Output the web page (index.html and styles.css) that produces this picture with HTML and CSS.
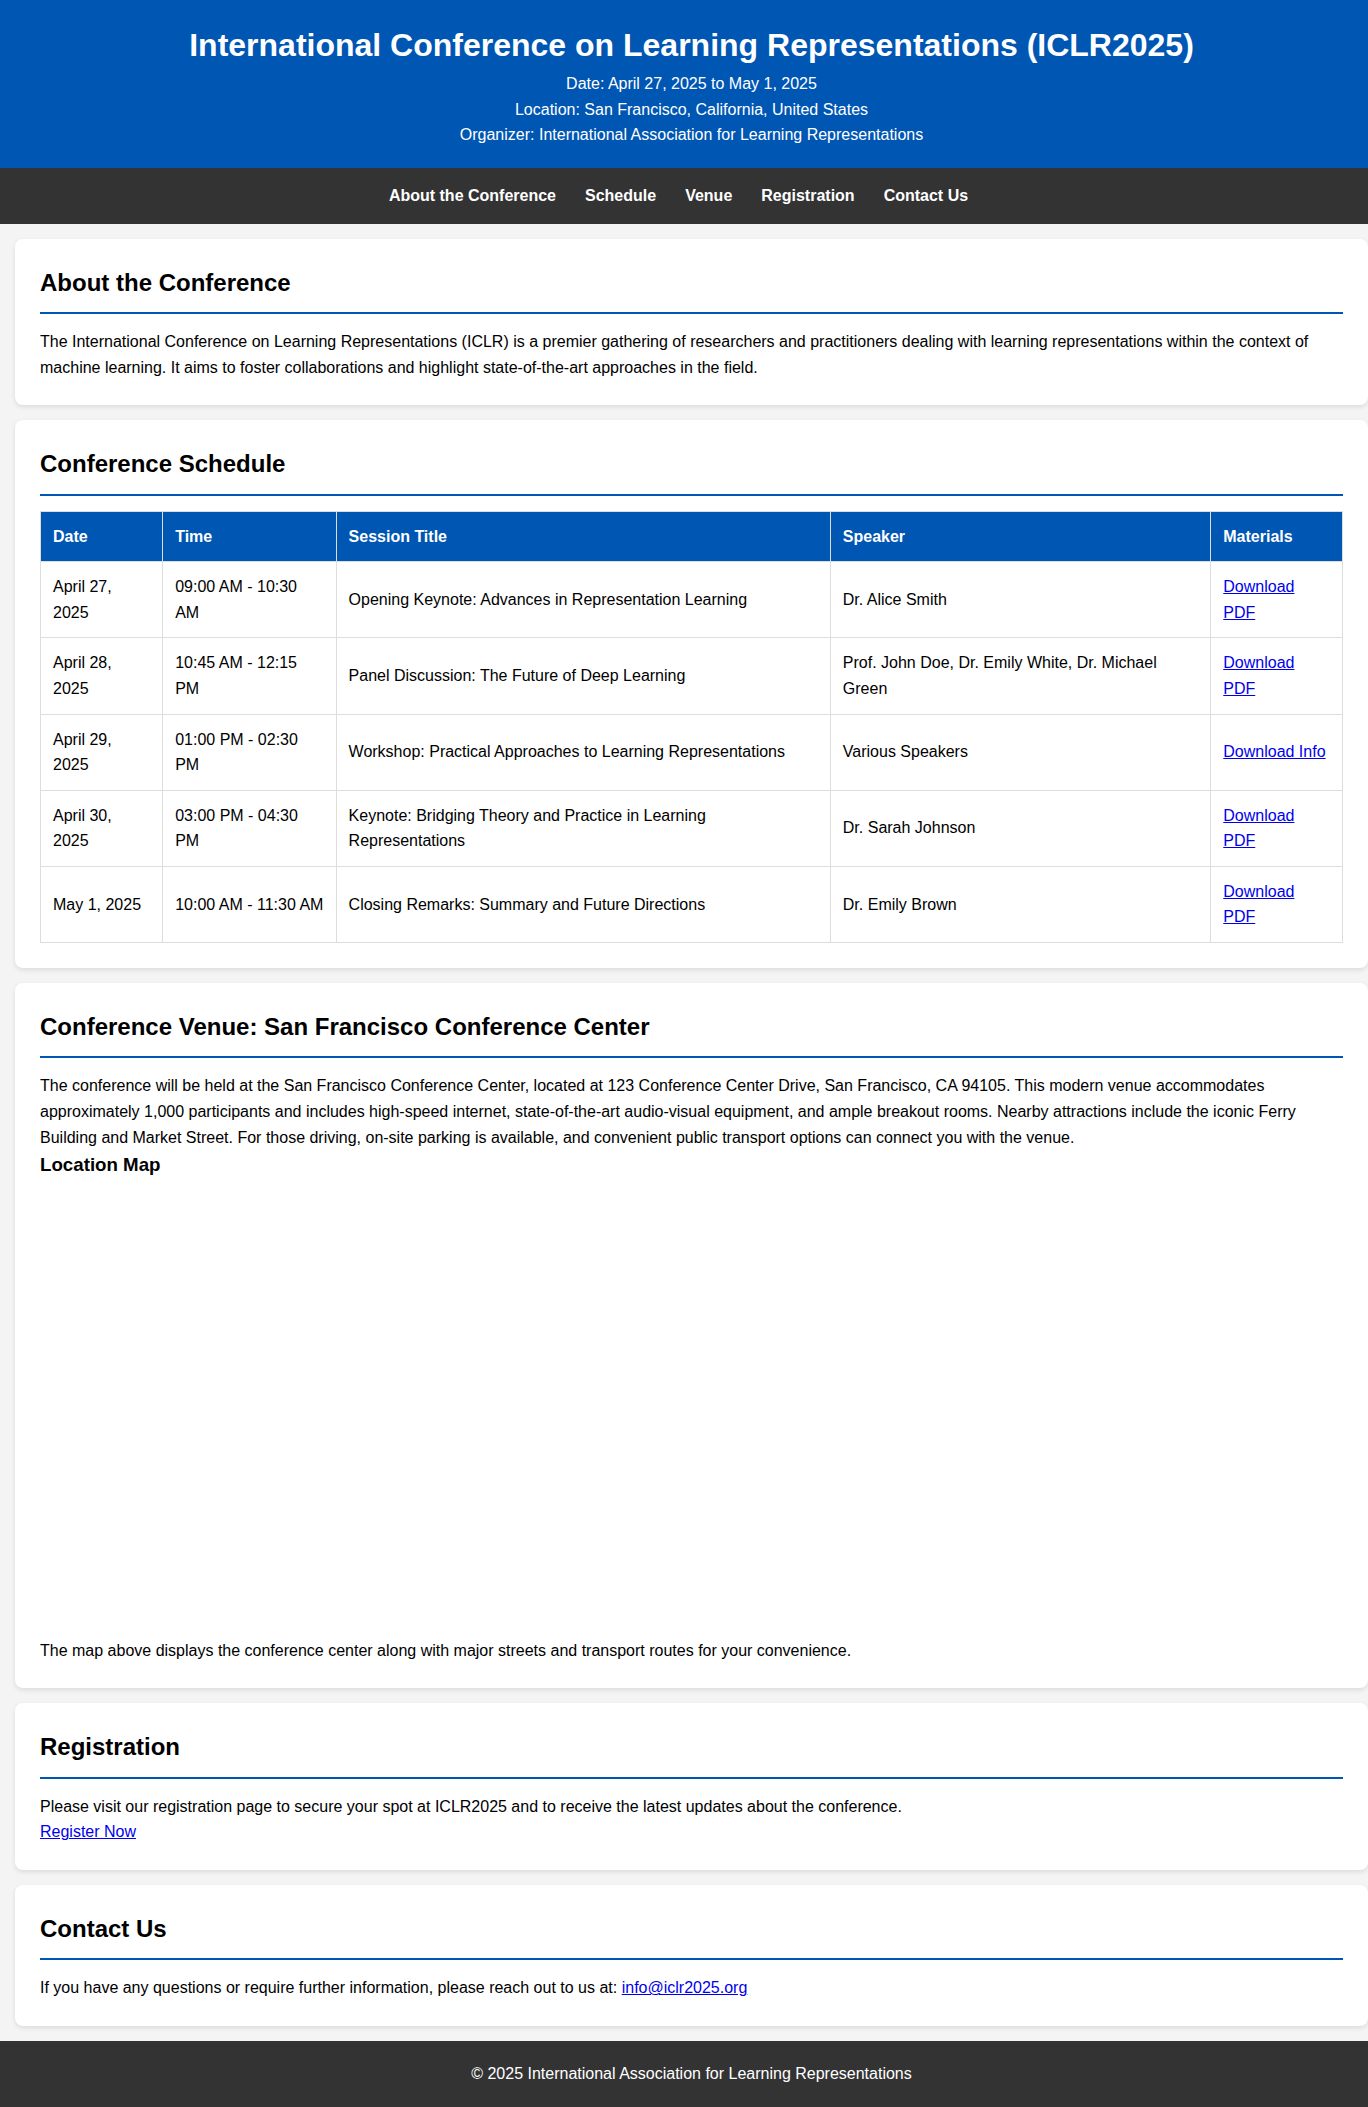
FILE: index.html
```html
<!DOCTYPE html>
<html lang="en">
<head>
<meta charset="utf-8">
<title>ICLR2025</title>
<link rel="stylesheet" href="styles.css">
</head>
<body>
<header class="site-header">
  <h1>International Conference on Learning Representations (ICLR2025)</h1>
  <p>Date: April 27, 2025 to May 1, 2025</p>
  <p>Location: San Francisco, California, United States</p>
  <p>Organizer: International Association for Learning Representations</p>
</header>
<nav class="site-nav">
  <a href="#about">About the Conference</a>
  <a href="#schedule">Schedule</a>
  <a href="#venue">Venue</a>
  <a href="#registration">Registration</a>
  <a href="#contact">Contact Us</a>
</nav>
<main>
  <section class="card" id="about">
    <h2>About the Conference</h2>
    <p>The International Conference on Learning Representations (ICLR) is a premier gathering of researchers and practitioners dealing with learning representations within the context of machine learning. It aims to foster collaborations and highlight state-of-the-art approaches in the field.</p>
  </section>
  <section class="card" id="schedule">
    <h2>Conference Schedule</h2>
    <table class="schedule">
      <thead>
        <tr><th>Date</th><th>Time</th><th>Session Title</th><th>Speaker</th><th>Materials</th></tr>
      </thead>
      <tbody>
        <tr><td>April 27, 2025</td><td>09:00 AM - 10:30 AM</td><td>Opening Keynote: Advances in Representation Learning</td><td>Dr. Alice Smith</td><td><a href="#">Download PDF</a></td></tr>
        <tr><td>April 28, 2025</td><td>10:45 AM - 12:15 PM</td><td>Panel Discussion: The Future of Deep Learning</td><td>Prof. John Doe, Dr. Emily White, Dr. Michael Green</td><td><a href="#">Download PDF</a></td></tr>
        <tr><td>April 29, 2025</td><td>01:00 PM - 02:30 PM</td><td>Workshop: Practical Approaches to Learning Representations</td><td>Various Speakers</td><td><a href="#">Download Info</a></td></tr>
        <tr><td>April 30, 2025</td><td>03:00 PM - 04:30 PM</td><td>Keynote: Bridging Theory and Practice in Learning Representations</td><td>Dr. Sarah Johnson</td><td><a href="#">Download PDF</a></td></tr>
        <tr><td>May 1, 2025</td><td>10:00 AM - 11:30 AM</td><td>Closing Remarks: Summary and Future Directions</td><td>Dr. Emily Brown</td><td><a href="#">Download PDF</a></td></tr>
      </tbody>
    </table>
  </section>
  <section class="card" id="venue">
    <h2>Conference Venue: San Francisco Conference Center</h2>
    <p>The conference will be held at the San Francisco Conference Center, located at 123 Conference Center Drive, San Francisco, CA 94105. This modern venue accommodates approximately 1,000 participants and includes high-speed internet, state-of-the-art audio-visual equipment, and ample breakout rooms. Nearby attractions include the iconic Ferry Building and Market Street. For those driving, on-site parking is available, and convenient public transport options can connect you with the venue.</p>
    <h3>Location Map</h3>
    <div class="map-line"><span class="map"></span></div>
    <p>The map above displays the conference center along with major streets and transport routes for your convenience.</p>
  </section>
  <section class="card" id="registration">
    <h2>Registration</h2>
    <p>Please visit our registration page to secure your spot at ICLR2025 and to receive the latest updates about the conference.</p>
    <p><a href="#">Register Now</a></p>
  </section>
  <section class="card" id="contact">
    <h2>Contact Us</h2>
    <p>If you have any questions or require further information, please reach out to us at: <a href="mailto:info@iclr2025.org">info@iclr2025.org</a></p>
  </section>
</main>
<footer class="site-footer">
  <p>&copy; 2025 International Association for Learning Representations</p>
</footer>
</body>
</html>
```
FILE: styles.css
```css
body {
  margin: 0;
  font-family: "Liberation Sans", Arial, sans-serif;
  font-size: 16px;
  line-height: 1.6;
  background: #f4f4f4;
  color: #000;
}

p {
  margin: 0;
}

.site-header {
  background: #0056b3;
  color: #fff;
  text-align: center;
  padding: 20px 0 20px 15px;
}

.site-header h1 {
  margin: 0;
  font-size: 32px;
}

.site-nav {
  background: #333;
  padding: 15px 11px 15px 0;
  display: flex;
  justify-content: center;
  gap: 29px;
}

.site-nav a {
  color: #fff;
  font-weight: bold;
  text-decoration: none;
}

.card {
  background: #fff;
  margin: 15px 0 15px 15px;
  padding: 25px;
  border-radius: 8px;
  box-shadow: 0 2px 5px rgba(0, 0, 0, 0.1);
}

.card h2 {
  margin: 0 0 15px;
  font-size: 24px;
  padding-bottom: 10px;
  border-bottom: 2px solid #0056b3;
}

.card h3 {
  margin: 0;
  font-size: 18.72px;
}

.schedule {
  width: 100%;
  border-collapse: collapse;
}

.schedule th,
.schedule td {
  border: 1px solid #ddd;
  padding: 12px;
  text-align: left;
}

.schedule th {
  background: #0056b3;
  color: #fff;
}

.map-line {
  line-height: 1.6;
}

.map {
  display: inline-block;
  width: 100%;
  height: 450px;
}

.site-footer {
  background: #333;
  color: #fff;
  text-align: center;
  padding: 20px 0 20px 15px;
}
```
